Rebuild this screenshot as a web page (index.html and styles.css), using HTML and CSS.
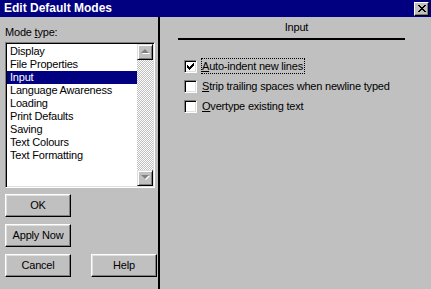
FILE: index.html
```html
<!DOCTYPE html>
<html>
<head>
<meta charset="utf-8">
<link rel="stylesheet" href="styles.css">
</head>
<body>
<div class="window">
  <div class="titlebar">
    <span class="title">Edit Default Modes</span>
    <div class="close">
      <svg width="8" height="7" viewBox="0 0 8 7"><path d="M0 0h2v1h1v1h2v-1h1v-1h2v1h-1v1h-1v1h-1v1h1v1h1v1h1v1h-2v-1h-1v-1h-2v1h-1v1h-2v-1h1v-1h1v-1h1v-1h-1v-1h-1v-1h-1z" fill="#000"/></svg>
    </div>
  </div>
  <div class="main">
    <div class="left">
      <div class="mode-label">Mode <u>t</u>ype:</div>
      <div class="listbox">
        <ul class="items">
          <li>Display</li>
          <li>File Properties</li>
          <li class="selected">Input</li>
          <li>Language Awareness</li>
          <li>Loading</li>
          <li>Print Defaults</li>
          <li>Saving</li>
          <li>Text Colours</li>
          <li>Text Formatting</li>
        </ul>
        <div class="scrollbar">
          <div class="sb-btn">
            <svg width="9" height="6" viewBox="0 0 9 6"><path d="M5 1l4 4H1z" fill="#fff"/><path d="M4 0l4 4H0z" fill="#808080"/></svg>
          </div>
          <div class="track"></div>
          <div class="sb-btn">
            <svg width="9" height="6" viewBox="0 0 9 6"><path d="M1 1h8l-4 4z" fill="#fff"/><path d="M0 0h8l-4 4z" fill="#808080"/></svg>
          </div>
        </div>
      </div>
      <div class="buttons">
        <div class="btn">OK</div>
        <div class="spacer"></div>
        <div class="btn">Apply Now</div>
        <div class="spacer"></div>
        <div class="btn">Cancel</div>
        <div class="btn">Help</div>
      </div>
    </div>
    <div class="divider"></div>
    <div class="right">
      <div class="header-title">Input</div>
      <div class="header-rule"></div>
      <div class="options">
        <div class="option">
          <div class="check">
            <svg width="7" height="7" viewBox="0 0 7 7" shape-rendering="crispEdges"><path d="M6 0h1v3h-1zM5 1h1v3h-1zM4 2h1v3h-1zM3 3h1v3h-1zM2 4h1v3h-1zM1 3h1v3h-1zM0 2h1v3h-1z" fill="#000"/></svg>
          </div>
          <span class="label focused"><u>A</u>uto-indent new lines</span>
        </div>
        <div class="option">
          <div class="check"></div>
          <span class="label"><u>S</u>trip trailing spaces when newline typed</span>
        </div>
        <div class="option">
          <div class="check"></div>
          <span class="label"><u>O</u>vertype existing text</span>
        </div>
      </div>
    </div>
  </div>
</div>
</body>
</html>
```
FILE: styles.css
```css
* { box-sizing: border-box; }
html, body { margin: 0; padding: 0; }
body {
  background: #c0c0c0;
  font-family: "Liberation Sans", Arial, sans-serif;
  font-size: 11px;
  letter-spacing: -0.2px;
  color: #000;
}
.window {
  width: 431px;
  height: 289px;
  display: flex;
  flex-direction: column;
  background: #c0c0c0;
  overflow: hidden;
}
.titlebar {
  height: 17px;
  background: #000080;
  display: flex;
  align-items: center;
  justify-content: space-between;
  padding: 0 2px 0 4px;
}
.title {
  color: #fff;
  font-weight: bold;
  font-size: 12px;
  letter-spacing: 0;
  line-height: 17px;
}
.close {
  width: 15px;
  height: 14px;
  background: #c0c0c0;
  border: 1px solid;
  border-color: #fff #000 #000 #fff;
  box-shadow: inset -1px -1px #808080;
  display: flex;
  align-items: center;
  justify-content: center;
}
.main {
  flex: 1;
  display: flex;
}
.left {
  width: 158px;
  padding: 9px 0 0 5px;
  display: flex;
  flex-direction: column;
}
.mode-label {
  line-height: 13px;
  height: 13px;
}
.listbox {
  margin-top: 3px;
  width: 150px;
  height: 146px;
  background: #fff;
  border: 1px solid;
  border-color: #808080 #fff #fff #808080;
  box-shadow: inset 1px 1px #000, inset -1px -1px #dfdfdf;
  padding: 1px;
  display: flex;
}
.items {
  list-style: none;
  margin: 0;
  padding: 1px 0 0 0;
  flex: 1;
}
.items li {
  line-height: 13px;
  height: 13px;
  padding-left: 3px;
}
.items li.selected {
  background: #000080;
  color: #fff;
}
.scrollbar {
  width: 16px;
  display: flex;
  flex-direction: column;
}
.track {
  flex: 1;
  background: repeating-conic-gradient(#fff 0 25%, #c0c0c0 0 50%) 0 0 / 2px 2px;
}
.sb-btn {
  height: 16px;
  background: #c0c0c0;
  border: 1px solid;
  border-color: #dfdfdf #000 #000 #dfdfdf;
  box-shadow: inset 1px 1px #fff, inset -1px -1px #808080;
  display: flex;
  align-items: center;
  justify-content: center;
}
.buttons {
  margin-top: 6px;
  display: grid;
  grid-template-columns: 66px 66px;
  grid-auto-rows: 23px;
  column-gap: 20px;
  row-gap: 7px;
}
.btn {
  background: #c0c0c0;
  border: 1px solid;
  border-color: #fff #000 #000 #fff;
  box-shadow: inset -1px -1px #808080, inset 1px 1px #dfdfdf;
  display: flex;
  align-items: center;
  justify-content: center;
  line-height: 13px;
}
.divider {
  width: 2px;
  background: #000;
}
.right {
  flex: 1;
  padding-top: 4px;
  display: flex;
  flex-direction: column;
}
.header-title {
  text-align: center;
  line-height: 13px;
  padding-left: 2px;
}
.header-rule {
  margin: 4px 26px 0 18px;
  height: 2px;
  background: #000;
}
.options {
  margin-top: 16px;
  padding-left: 24px;
  display: flex;
  flex-direction: column;
}
.option {
  height: 20px;
  display: flex;
  align-items: center;
}
.check {
  width: 13px;
  height: 13px;
  background: #fff;
  border: 1px solid;
  border-color: #808080 #fff #fff #808080;
  box-shadow: inset 1px 1px #000, inset -1px -1px #dfdfdf;
  display: flex;
  align-items: center;
  justify-content: center;
}
.label {
  margin-left: 4px;
  line-height: 14px;
  border: 1px dotted transparent;
  padding: 0 1px 0 0;
}
.label.focused {
  border-color: #000;
}
```
